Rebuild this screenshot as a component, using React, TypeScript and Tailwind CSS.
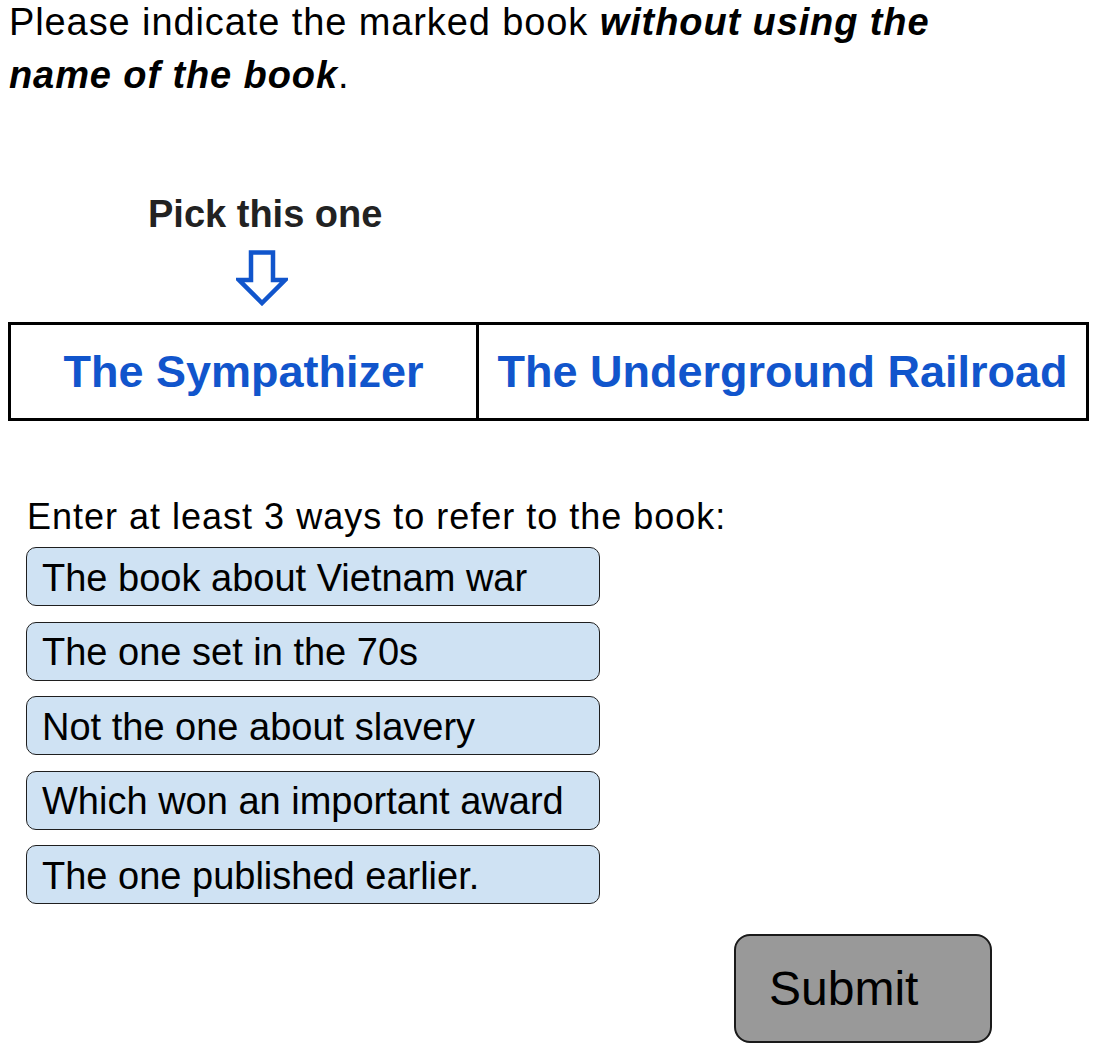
const answers = [
  "The book about Vietnam war",
  "The one set in the 70s",
  "Not the one about slavery",
  "Which won an important award",
  "The one published earlier.",
];

function DownArrow() {
  return (
    <svg width="52" height="56" viewBox="0 0 52 56" className="ml-[236px] mt-[14px] block">
      <path
        d="M15 2.5 H37 V30 H49 L26 53 L3 30 H15 Z"
        fill="#ffffff"
        stroke="#1155cc"
        strokeWidth="4.5"
        strokeLinejoin="miter"
      />
    </svg>
  );
}

export default function App() {
  return (
    <div className="h-[1056px] w-[1097px] overflow-hidden bg-white font-['Liberation_Sans',Arial,sans-serif] text-black">
      <div className="-mt-[4px] pl-[9px] text-[38px] leading-[53px] tracking-[0.9px]">
        <div>
          Please indicate the marked book <span className="font-bold italic">without using the</span>
        </div>
        <div>
          <span className="font-bold italic">name of the book</span>.
        </div>
      </div>

      <div className="ml-[148px] mt-[90px] text-[38px] font-bold leading-[44px] text-[#222222]">
        Pick this one
      </div>

      <DownArrow />

      <div className="ml-[8px] mt-[16px] flex h-[99px] w-[1081px] border-[3px] border-black">
        <div className="flex w-[468px] items-center justify-center border-r-[3px] border-black text-[45px] font-bold text-[#1155cc]">
          The Sympathizer
        </div>
        <div className="flex flex-1 items-center justify-center text-[45px] font-bold text-[#1155cc]">
          The Underground Railroad
        </div>
      </div>

      <div className="ml-[27px] mt-[76px] text-[36px] leading-[40px] tracking-[1px]">
        Enter at least 3 ways to refer to the book:
      </div>

      <div className="ml-[26px] mt-[10px] flex w-[574px] flex-col gap-[15.5px]">
        {answers.map((answer) => (
          <div
            key={answer}
            className="flex h-[59px] items-center rounded-[10px] border-[1.5px] border-[#1f1f1f] bg-[#cfe2f3] pl-[15px] pt-[2px] text-[38px] leading-none"
          >
            {answer}
          </div>
        ))}
      </div>

      <button
        type="button"
        className="ml-[734px] mt-[30px] flex h-[109px] w-[258px] items-center rounded-[16px] border-2 border-[#1a1a1a] bg-[#999999] pl-[33px] text-[48px] leading-none text-black"
      >
        Submit
      </button>
    </div>
  );
}
